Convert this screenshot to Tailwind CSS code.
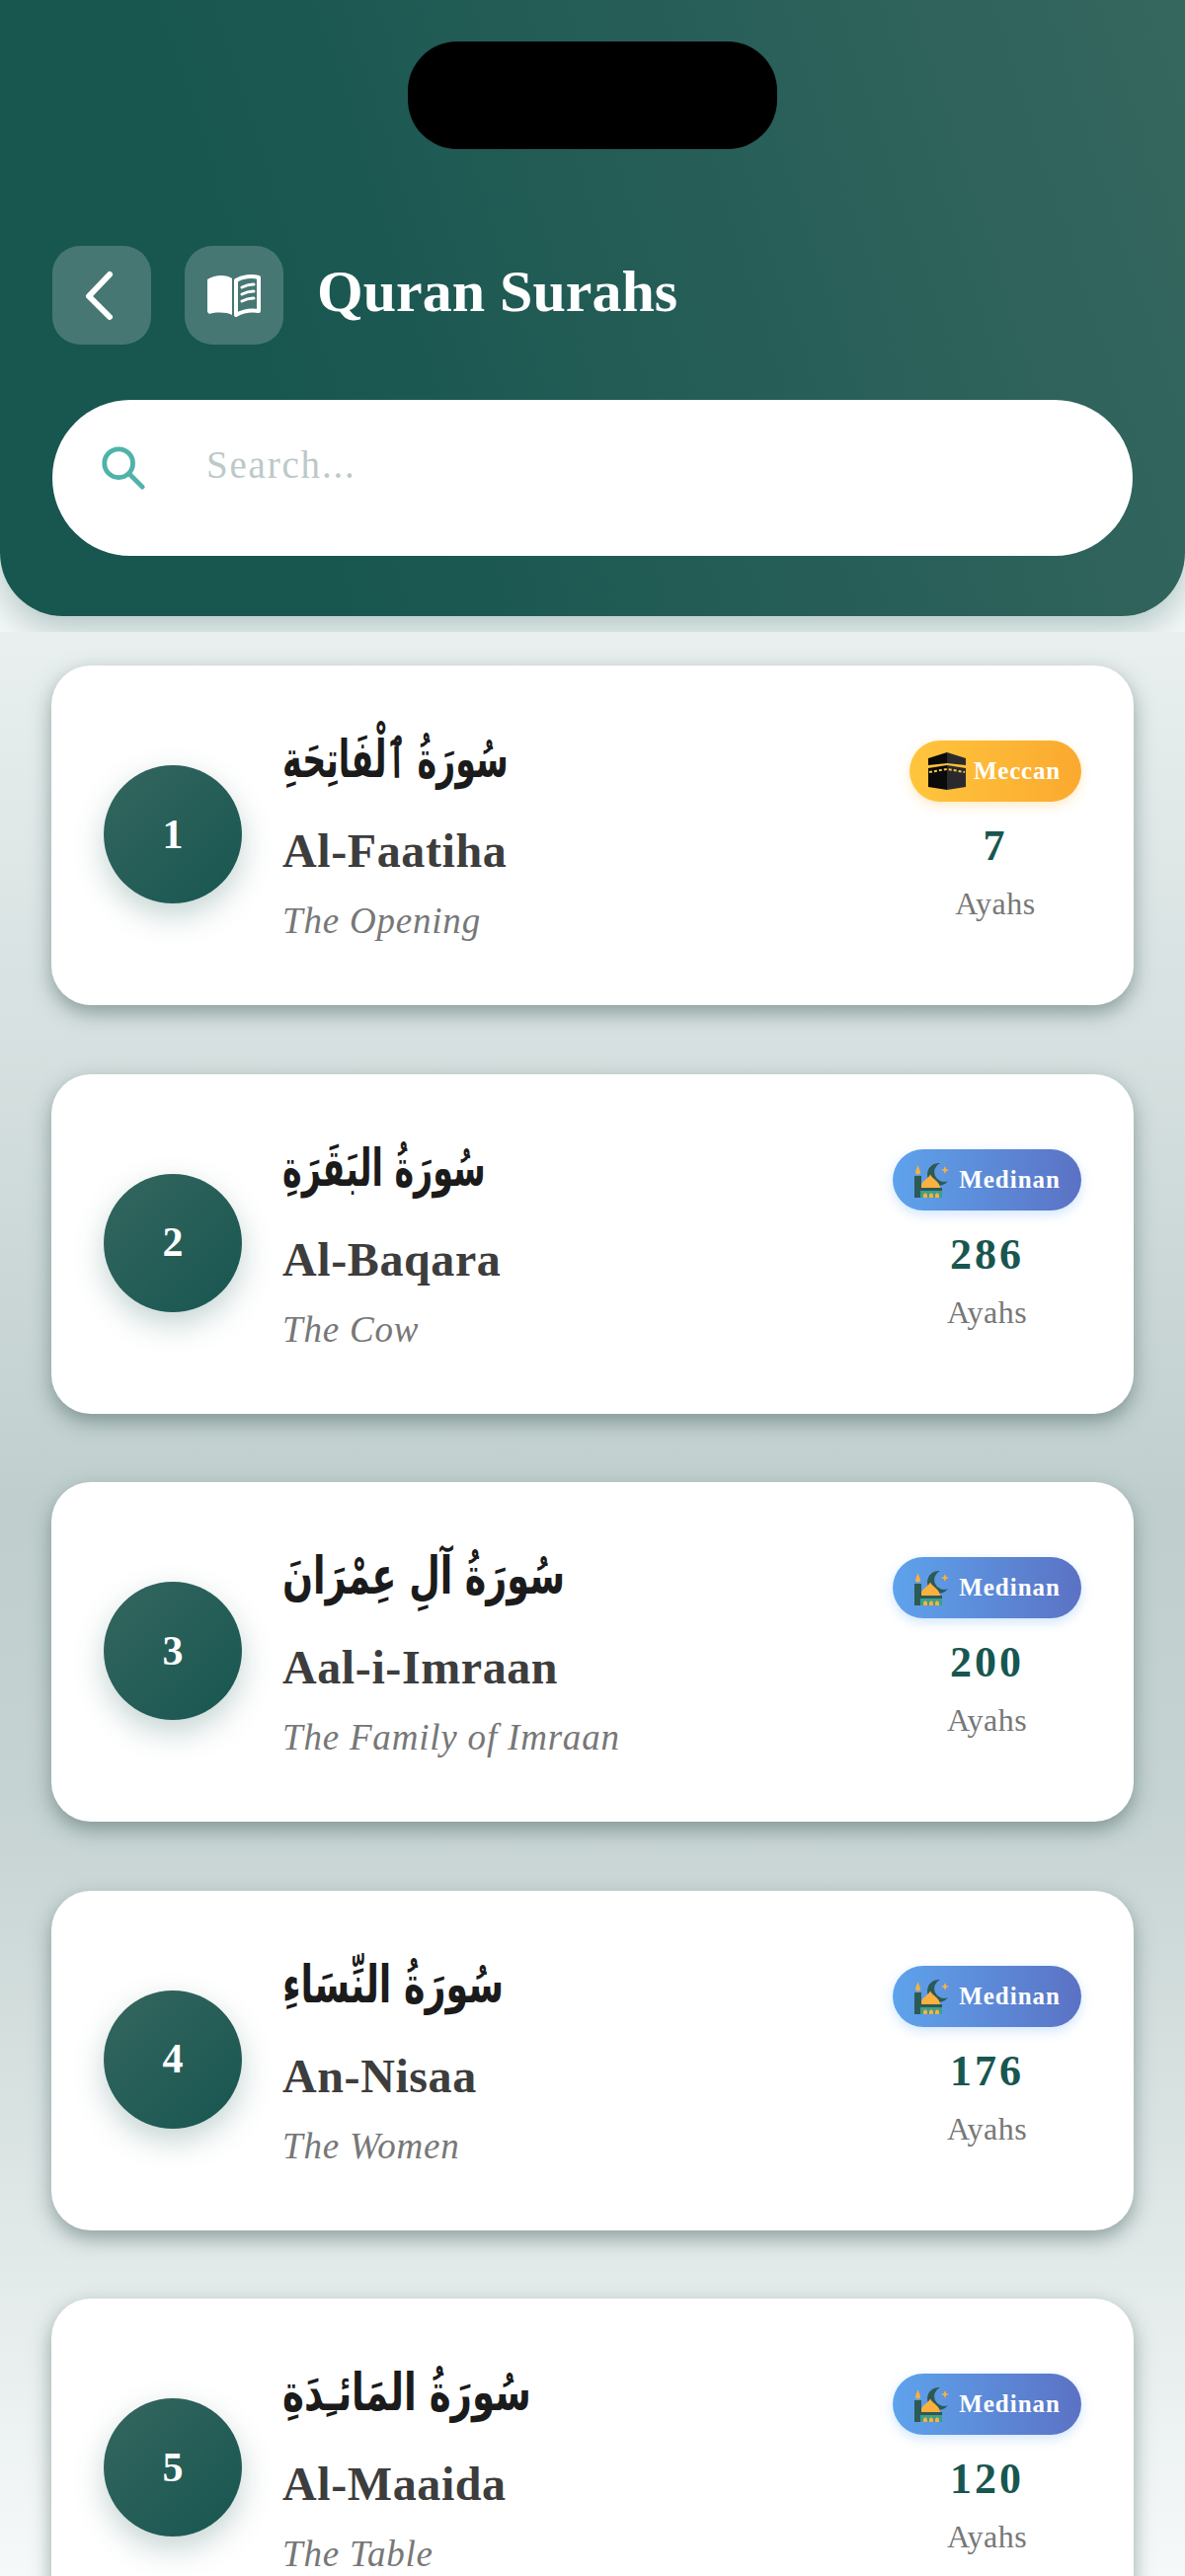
<!DOCTYPE html>
<html lang="en"><head><meta charset="utf-8">
<script src="https://cdn.jsdelivr.net/npm/@tailwindcss/browser@4"></script>
</head>
<body class="m-0 overflow-hidden">
<div class="w-[1200px] h-[2609px] overflow-hidden font-['Liberation_Serif',serif] bg-[#f5f8f8]">
  <header class="relative h-[624px] rounded-b-[64px] bg-[linear-gradient(72deg,#185650_0%,#185650_25%,#36675f_100%)] shadow-[0_14px_36px_rgba(24,86,80,0.3)] px-[53px] pt-[249px]">
    <div class="absolute left-[413px] top-[42px] w-[374px] h-[109px] rounded-[50px] bg-black"></div>
    <div class="flex items-center">
      <div class="w-[100px] h-[100px] rounded-[28px] bg-white/20 flex items-center justify-center">
        <svg width="60" height="60" viewBox="0 0 60 60" fill="none" stroke="#fff" stroke-width="6" stroke-linecap="round" stroke-linejoin="round"><path d="M38 9 L17 31 L38 52"/></svg>
      </div>
      <div class="w-[100px] h-[100px] ml-[34px] rounded-[28px] bg-white/20 flex items-center justify-center">
        <svg width="56" height="44" viewBox="0 0 56 44"><path fill="#fff" d="M1 6 C9 1 20 1 26 5 V42 C20 39 10 39 3 41 L1 39 Z"/><path fill="none" stroke="#fff" stroke-width="4" stroke-linejoin="round" d="M30 7 C36 3 46 2 53 4 V38 C46 37 37 38 30 42 Z"/><path fill="none" stroke="#fff" stroke-width="3" stroke-linecap="round" d="M36 14 C40 12 44 11 48 11 M36 21 C40 19 44 18 48 18 M36 28 C40 26 44 25 48 25"/></svg>
      </div>
      <h1 class="ml-[34px] text-[60px] leading-[64px] font-bold text-white -mt-[8px]">Quran Surahs</h1>
    </div>
    <div class="mt-[56px] h-[158px] rounded-full bg-white flex items-start pl-[48px] pt-[45px]">
      <svg width="46" height="46" viewBox="0 0 48 48" fill="none" stroke="#4fb3a9" stroke-width="5" stroke-linecap="round"><circle cx="20" cy="20" r="15"/><path d="M31 31 L45 45"/></svg>
      <span class="ml-[62px] text-[39px] leading-[44px] text-[#bcc9c8] tracking-[1.8px] -mt-[1px]">Search...</span>
    </div>
  </header>
  <main class="relative mt-[16px] h-[1969px] overflow-hidden pt-[34px] px-[52px] flex flex-col gap-[69.5px] bg-[linear-gradient(180deg,#e9efef_0%,#c0cfce_45%,#c5d3d2_60%,#f6f9f9_100%)]">

    <article class="h-[344px] shrink-0 rounded-[40px] bg-white shadow-[0_8px_20px_rgba(60,90,88,0.5)] flex items-center pl-[53px] pr-[53px]">
      <div class="w-[140px] h-[140px] shrink-0 rounded-full bg-[linear-gradient(135deg,#34665f,#185650)] shadow-[0_12px_30px_rgba(24,86,80,0.25)] flex items-center justify-center text-white text-[42px] font-bold -mt-[2px]">1</div>
      <div class="ml-[41px] flex-1 flex flex-col pt-[5px]">
        <div dir="rtl" class="self-start origin-left scale-x-[0.64] font-['DejaVu_Sans',serif] font-bold text-[52px] leading-[60px] text-[#1b1b1b]">سُورَةُ ٱلْفَاتِحَةِ</div>
        <div class="mt-[33px] text-[48px] leading-[60px] font-bold text-[#3d3d3d] tracking-[0.6px]">Al-Faatiha</div>
        <div class="mt-[16px] text-[37px] leading-[50px] italic text-[#777] tracking-[0.8px]">The Opening</div>
      </div>
      <div class="flex flex-col items-center -mt-[7px]">
        <div class="h-[62px] pl-[19px] pr-[21px] rounded-full bg-[linear-gradient(90deg,#ffc53d,#fba92f)] shadow-[0_4px_12px_rgba(255,190,70,0.3)] flex items-center gap-[8px] text-white font-bold text-[25px] tracking-[0.8px]">
          <svg width="38" height="38" viewBox="0 0 38 38"><path fill="#0a0a0a" d="M0 6 L19 0 V11 L0 13Z"/><path fill="#2a2a2e" d="M19 0 L38 6 V13 L19 11Z"/><path fill="#0a0a0a" d="M0 16 L19 13 V38 L0 35Z"/><path fill="#2a2a2e" d="M19 13 L38 16 V35 L19 38Z"/><path fill="none" stroke="#ffc53d" stroke-width="2" stroke-dasharray="3 2" d="M1 20 L19 17 L37 20"/></svg>
          <span>Meccan</span>
        </div>
        <div class="mt-[20px] text-[44px] leading-[50px] font-bold text-[#185650] tracking-[3px]">7</div>
        <div class="mt-[13px] text-[32px] leading-[40px] text-[#777] tracking-[0.5px]">Ayahs</div>
      </div>
    </article>

    <article class="h-[344px] shrink-0 rounded-[40px] bg-white shadow-[0_8px_20px_rgba(60,90,88,0.5)] flex items-center pl-[53px] pr-[53px]">
      <div class="w-[140px] h-[140px] shrink-0 rounded-full bg-[linear-gradient(135deg,#34665f,#185650)] shadow-[0_12px_30px_rgba(24,86,80,0.25)] flex items-center justify-center text-white text-[42px] font-bold -mt-[2px]">2</div>
      <div class="ml-[41px] flex-1 flex flex-col pt-[5px]">
        <div dir="rtl" class="self-start origin-left scale-x-[0.64] font-['DejaVu_Sans',serif] font-bold text-[52px] leading-[60px] text-[#1b1b1b]">سُورَةُ البَقَرَةِ</div>
        <div class="mt-[33px] text-[48px] leading-[60px] font-bold text-[#3d3d3d] tracking-[0.6px]">Al-Baqara</div>
        <div class="mt-[16px] text-[37px] leading-[50px] italic text-[#777] tracking-[0.8px]">The Cow</div>
      </div>
      <div class="flex flex-col items-center -mt-[7px]">
        <div class="h-[62px] pl-[22px] pr-[21px] rounded-full bg-[linear-gradient(90deg,#5ea3ec,#5b72c4)] shadow-[0_4px_12px_rgba(100,170,245,0.3)] flex items-center gap-[9px] text-white font-bold text-[25px] tracking-[1px]">
          <svg width="36" height="36" viewBox="0 0 36 36"><path fill="#2c5a55" fill-rule="evenodd" d="M26 1 A11.500 11.500 0 1 0 34 19 A9.500 9.500 0 0 1 26 1Z"/><path fill="#fbb040" d="M31 4 L32.200 7 L35 8 L32.200 9 L31 12 L29.800 9 L27 8 L29.800 7Z"/><path fill="#fbb040" d="M6 26 C6 20 13 18 16 12.500 C19 18 26 20 26 26Z"/><path fill="#2c5a55" d="M0 14 H7 V36 H0Z"/><path fill="#fbb040" d="M3.500 3 L6 10 A2.500 2.500 0 0 1 1 10Z"/><path fill="#2c5a55" d="M5 26 H28 V29 H5Z"/><path fill="#3f9e8e" d="M6 29 H28 V36 H6Z"/><path fill="#fbb040" d="M9 36 V33 L11 31 L13 33 V36Z M15 36 V33 L17 31 L19 33 V36Z M21 36 V33 L23 31 L25 33 V36Z"/></svg>
          <span>Medinan</span>
        </div>
        <div class="mt-[20px] text-[44px] leading-[50px] font-bold text-[#185650] tracking-[3px]">286</div>
        <div class="mt-[13px] text-[32px] leading-[40px] text-[#777] tracking-[0.5px]">Ayahs</div>
      </div>
    </article>

    <article class="h-[344px] shrink-0 rounded-[40px] bg-white shadow-[0_8px_20px_rgba(60,90,88,0.5)] flex items-center pl-[53px] pr-[53px]">
      <div class="w-[140px] h-[140px] shrink-0 rounded-full bg-[linear-gradient(135deg,#34665f,#185650)] shadow-[0_12px_30px_rgba(24,86,80,0.25)] flex items-center justify-center text-white text-[42px] font-bold -mt-[2px]">3</div>
      <div class="ml-[41px] flex-1 flex flex-col pt-[5px]">
        <div dir="rtl" class="self-start origin-left scale-x-[0.70] font-['DejaVu_Sans',serif] font-bold text-[52px] leading-[60px] text-[#1b1b1b]">سُورَةُ آلِ عِمْرَانَ</div>
        <div class="mt-[33px] text-[48px] leading-[60px] font-bold text-[#3d3d3d] tracking-[0.6px]">Aal-i-Imraan</div>
        <div class="mt-[16px] text-[37px] leading-[50px] italic text-[#777] tracking-[0.8px]">The Family of Imraan</div>
      </div>
      <div class="flex flex-col items-center -mt-[7px]">
        <div class="h-[62px] pl-[22px] pr-[21px] rounded-full bg-[linear-gradient(90deg,#5ea3ec,#5b72c4)] shadow-[0_4px_12px_rgba(100,170,245,0.3)] flex items-center gap-[9px] text-white font-bold text-[25px] tracking-[1px]">
          <svg width="36" height="36" viewBox="0 0 36 36"><path fill="#2c5a55" fill-rule="evenodd" d="M26 1 A11.500 11.500 0 1 0 34 19 A9.500 9.500 0 0 1 26 1Z"/><path fill="#fbb040" d="M31 4 L32.200 7 L35 8 L32.200 9 L31 12 L29.800 9 L27 8 L29.800 7Z"/><path fill="#fbb040" d="M6 26 C6 20 13 18 16 12.500 C19 18 26 20 26 26Z"/><path fill="#2c5a55" d="M0 14 H7 V36 H0Z"/><path fill="#fbb040" d="M3.500 3 L6 10 A2.500 2.500 0 0 1 1 10Z"/><path fill="#2c5a55" d="M5 26 H28 V29 H5Z"/><path fill="#3f9e8e" d="M6 29 H28 V36 H6Z"/><path fill="#fbb040" d="M9 36 V33 L11 31 L13 33 V36Z M15 36 V33 L17 31 L19 33 V36Z M21 36 V33 L23 31 L25 33 V36Z"/></svg>
          <span>Medinan</span>
        </div>
        <div class="mt-[20px] text-[44px] leading-[50px] font-bold text-[#185650] tracking-[3px]">200</div>
        <div class="mt-[13px] text-[32px] leading-[40px] text-[#777] tracking-[0.5px]">Ayahs</div>
      </div>
    </article>

    <article class="h-[344px] shrink-0 rounded-[40px] bg-white shadow-[0_8px_20px_rgba(60,90,88,0.5)] flex items-center pl-[53px] pr-[53px]">
      <div class="w-[140px] h-[140px] shrink-0 rounded-full bg-[linear-gradient(135deg,#34665f,#185650)] shadow-[0_12px_30px_rgba(24,86,80,0.25)] flex items-center justify-center text-white text-[42px] font-bold -mt-[2px]">4</div>
      <div class="ml-[41px] flex-1 flex flex-col pt-[5px]">
        <div dir="rtl" class="self-start origin-left scale-x-[0.70] font-['DejaVu_Sans',serif] font-bold text-[52px] leading-[60px] text-[#1b1b1b]">سُورَةُ النِّسَاءِ</div>
        <div class="mt-[33px] text-[48px] leading-[60px] font-bold text-[#3d3d3d] tracking-[0.6px]">An-Nisaa</div>
        <div class="mt-[16px] text-[37px] leading-[50px] italic text-[#777] tracking-[0.8px]">The Women</div>
      </div>
      <div class="flex flex-col items-center -mt-[7px]">
        <div class="h-[62px] pl-[22px] pr-[21px] rounded-full bg-[linear-gradient(90deg,#5ea3ec,#5b72c4)] shadow-[0_4px_12px_rgba(100,170,245,0.3)] flex items-center gap-[9px] text-white font-bold text-[25px] tracking-[1px]">
          <svg width="36" height="36" viewBox="0 0 36 36"><path fill="#2c5a55" fill-rule="evenodd" d="M26 1 A11.500 11.500 0 1 0 34 19 A9.500 9.500 0 0 1 26 1Z"/><path fill="#fbb040" d="M31 4 L32.200 7 L35 8 L32.200 9 L31 12 L29.800 9 L27 8 L29.800 7Z"/><path fill="#fbb040" d="M6 26 C6 20 13 18 16 12.500 C19 18 26 20 26 26Z"/><path fill="#2c5a55" d="M0 14 H7 V36 H0Z"/><path fill="#fbb040" d="M3.500 3 L6 10 A2.500 2.500 0 0 1 1 10Z"/><path fill="#2c5a55" d="M5 26 H28 V29 H5Z"/><path fill="#3f9e8e" d="M6 29 H28 V36 H6Z"/><path fill="#fbb040" d="M9 36 V33 L11 31 L13 33 V36Z M15 36 V33 L17 31 L19 33 V36Z M21 36 V33 L23 31 L25 33 V36Z"/></svg>
          <span>Medinan</span>
        </div>
        <div class="mt-[20px] text-[44px] leading-[50px] font-bold text-[#185650] tracking-[3px]">176</div>
        <div class="mt-[13px] text-[32px] leading-[40px] text-[#777] tracking-[0.5px]">Ayahs</div>
      </div>
    </article>

    <article class="h-[344px] shrink-0 rounded-[40px] bg-white shadow-[0_8px_20px_rgba(60,90,88,0.5)] flex items-center pl-[53px] pr-[53px]">
      <div class="w-[140px] h-[140px] shrink-0 rounded-full bg-[linear-gradient(135deg,#34665f,#185650)] shadow-[0_12px_30px_rgba(24,86,80,0.25)] flex items-center justify-center text-white text-[42px] font-bold -mt-[2px]">5</div>
      <div class="ml-[41px] flex-1 flex flex-col pt-[5px]">
        <div dir="rtl" class="self-start origin-left scale-x-[0.715] font-['DejaVu_Sans',serif] font-bold text-[52px] leading-[60px] text-[#1b1b1b]">سُورَةُ المَائـِدَةِ</div>
        <div class="mt-[33px] text-[48px] leading-[60px] font-bold text-[#3d3d3d] tracking-[0.6px]">Al-Maaida</div>
        <div class="mt-[16px] text-[37px] leading-[50px] italic text-[#777] tracking-[0.8px]">The Table</div>
      </div>
      <div class="flex flex-col items-center -mt-[7px]">
        <div class="h-[62px] pl-[22px] pr-[21px] rounded-full bg-[linear-gradient(90deg,#5ea3ec,#5b72c4)] shadow-[0_4px_12px_rgba(100,170,245,0.3)] flex items-center gap-[9px] text-white font-bold text-[25px] tracking-[1px]">
          <svg width="36" height="36" viewBox="0 0 36 36"><path fill="#2c5a55" fill-rule="evenodd" d="M26 1 A11.500 11.500 0 1 0 34 19 A9.500 9.500 0 0 1 26 1Z"/><path fill="#fbb040" d="M31 4 L32.200 7 L35 8 L32.200 9 L31 12 L29.800 9 L27 8 L29.800 7Z"/><path fill="#fbb040" d="M6 26 C6 20 13 18 16 12.500 C19 18 26 20 26 26Z"/><path fill="#2c5a55" d="M0 14 H7 V36 H0Z"/><path fill="#fbb040" d="M3.500 3 L6 10 A2.500 2.500 0 0 1 1 10Z"/><path fill="#2c5a55" d="M5 26 H28 V29 H5Z"/><path fill="#3f9e8e" d="M6 29 H28 V36 H6Z"/><path fill="#fbb040" d="M9 36 V33 L11 31 L13 33 V36Z M15 36 V33 L17 31 L19 33 V36Z M21 36 V33 L23 31 L25 33 V36Z"/></svg>
          <span>Medinan</span>
        </div>
        <div class="mt-[20px] text-[44px] leading-[50px] font-bold text-[#185650] tracking-[3px]">120</div>
        <div class="mt-[13px] text-[32px] leading-[40px] text-[#777] tracking-[0.5px]">Ayahs</div>
      </div>
    </article>

  </main>
</div>
</body></html>
